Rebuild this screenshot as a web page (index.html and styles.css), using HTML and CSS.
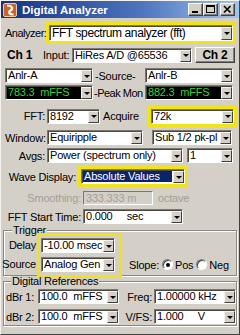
FILE: index.html
```html
<!DOCTYPE html>
<html lang="en">
<head>
    <meta charset="UTF-8">
    <meta name="viewport" content="width=device-width, initial-scale=1.0">
    <title>Digital Analyzer</title>
    <link rel="stylesheet" href="styles.css">
</head>
<body>
    <div class="window">
        <div class="titlebar">
            <svg class="app-icon" width="14" height="14" viewBox="0 0 14 14">
                <rect x="0.5" y="0.5" width="13" height="13" rx="1.5" fill="#c8642c" stroke="#f3c9a2"/>
                <path d="M4 2.5 C9 2.5 10.5 5.5 7.5 7.5 C5 9 6 11.5 10.5 11.5" fill="none" stroke="#fff" stroke-width="2.2"/>
            </svg>
            <span class="title">Digital Analyzer</span>
            <div class="caption">
                <span class="cap-btn"><svg width="13" height="11" viewBox="0 0 13 11"><rect x="3" y="7" width="6" height="2" fill="#000"/></svg></span>
                <span class="cap-btn"><svg width="13" height="11" viewBox="0 0 13 11"><rect x="2.5" y="1.5" width="8" height="7" fill="none" stroke="#000"/><rect x="2" y="1" width="9" height="2" fill="#000"/></svg></span>
                <span class="cap-btn close"><svg width="13" height="11" viewBox="0 0 13 11"><path d="M3 2 L9.5 8.5 M9.5 2 L3 8.5" stroke="#000" stroke-width="1.6"/></svg></span>
            </div>
        </div>

        <div class="panel">
            <div class="row r-analyzer">
                <span class="lbl analyzer-lbl">Analyzer:</span>
                <div class="hilite hl-analyzer">
                    <div class="combo big"><span class="val">FFT spectrum analyzer (fft)</span><span class="arrow"></span></div>
                </div>
            </div>

            <div class="row r-ch">
                <span class="ch1">Ch 1</span>
                <span class="lbl input-lbl">Input:</span>
                <div class="combo w-input"><span class="val">HiRes A/D @65536</span><span class="arrow"></span></div>
                <span class="ch2">Ch 2</span>
            </div>

            <div class="row r-source">
                <div class="combo w-half"><span class="val">Anlr-A</span><span class="arrow"></span></div>
                <span class="lbl mid-lbl">-Source-</span>
                <div class="combo w-half"><span class="val">Anlr-B</span><span class="arrow"></span></div>
            </div>

            <div class="row r-peak">
                <div class="combo lcd w-half"><span class="val">783.3  mFFS</span><span class="arrow"></span></div>
                <span class="lbl mid-lbl tight">-Peak Mon</span>
                <div class="combo lcd w-half"><span class="val">882.3  mFFS</span><span class="arrow"></span></div>
            </div>

            <div class="row r-fft">
                <span class="lbl lbl-r">FFT:</span>
                <div class="combo w-fft"><span class="val">8192</span><span class="arrow"></span></div>
                <span class="lbl acq-lbl">Acquire</span>
                <div class="hilite hl-acq">
                    <div class="combo"><span class="val">72k</span><span class="arrow"></span></div>
                </div>
            </div>

            <div class="row r-window">
                <span class="lbl lbl-r">Window:</span>
                <div class="combo w-window"><span class="val">Equiripple</span><span class="arrow"></span></div>
                <div class="combo w-sub"><span class="val">Sub 1/2 pk-pl</span><span class="arrow"></span></div>
            </div>

            <div class="row r-avgs">
                <span class="lbl lbl-r">Avgs:</span>
                <div class="combo w-avgs"><span class="val">Power (spectrum only)</span><span class="arrow"></span></div>
                <div class="combo w-count"><span class="val">1</span><span class="arrow"></span></div>
            </div>

            <div class="row r-wave">
                <span class="lbl lbl-r lbl-wide">Wave Display:</span>
                <div class="hilite hl-wave">
                    <div class="combo sel"><span class="val">Absolute Values</span><span class="arrow"></span></div>
                </div>
            </div>

            <div class="row r-smooth">
                <span class="lbl lbl-r lbl-long off">Smoothing:</span>
                <div class="field off w-smooth">333.333 m</div>
                <span class="lbl off octave">octave</span>
            </div>

            <div class="row r-start">
                <span class="lbl lbl-r lbl-long">FFT Start Time:</span>
                <div class="combo w-start"><span class="val">0.000     sec</span><span class="arrow"></span></div>
            </div>

            <fieldset class="group trigger">
                <legend>Trigger</legend>
                <div class="trig">
                    <div class="trig-labels">
                        <span class="lbl">Delay</span>
                        <span class="lbl">Source</span>
                    </div>
                    <div class="hilite hl-trig">
                        <div class="combo"><span class="val">-10.00 msec</span><span class="arrow"></span></div>
                        <div class="combo"><span class="val">Analog Gen</span><span class="arrow"></span></div>
                    </div>
                    <div class="slope">
                        <span class="lbl">Slope:</span>
                        <span class="radio checked"></span>
                        <span class="lbl">Pos</span>
                        <span class="radio"></span>
                        <span class="lbl">Neg</span>
                    </div>
                </div>
            </fieldset>

            <fieldset class="group refs">
                <legend>Digital References</legend>
                <div class="row ref-row">
                    <span class="lbl ref-lbl">dBr 1:</span>
                    <div class="combo w-ref"><span class="val">100.0  mFFS</span><span class="arrow"></span></div>
                    <span class="lbl lbl-r ref-r">Freq:</span>
                    <div class="combo w-ref2"><span class="val">1.00000 kHz</span><span class="arrow"></span></div>
                </div>
                <div class="row ref-row">
                    <span class="lbl ref-lbl">dBr 2:</span>
                    <div class="combo w-ref"><span class="val">100.0  mFFS</span><span class="arrow"></span></div>
                    <span class="lbl lbl-r ref-r">V/FS:</span>
                    <div class="combo w-ref2"><span class="val">1.000     V</span><span class="arrow"></span></div>
                </div>
            </fieldset>
        </div>
    </div>
</body>
</html>
```

FILE: styles.css
```css
* {
    box-sizing: border-box;
}
body {
    margin: 0;
    background: #d4d0c8;
    font-family: "Liberation Sans", Arial, sans-serif;
    font-size: 11px;
    letter-spacing: -0.2px;
    color: #000;
}
.window {
    width: 240px;
    height: 335px;
    border: 1px solid;
    border-color: #f4f2ee #404040 #404040 #f4f2ee;
    background: #d4d0c8;
    overflow: hidden;
}
.titlebar {
    height: 17px;
    display: flex;
    align-items: center;
    padding: 0 4px 0 2px;
    background: linear-gradient(90deg, #133383, #4f76bf 60%, #a3c4ec);
}
.app-icon {
    flex: none;
}
.title {
    flex: 1;
    margin-left: 5px;
    color: #fff;
    font-weight: bold;
    font-size: 11.5px;
    letter-spacing: 0;
}
.caption {
    display: flex;
}
.cap-btn {
    width: 15px;
    height: 13px;
    background: #d4d0c8;
    border: 1px solid;
    border-color: #fff #404040 #404040 #fff;
    box-shadow: inset -1px -1px #808080;
}
.cap-btn svg {
    display: block;
}
.cap-btn.close {
    margin-left: 2px;
}

.panel {
    padding: 4px 2px 0 4px;
}
.row {
    display: flex;
    align-items: center;
    height: 15px;
}
.lbl {
    white-space: nowrap;
    flex: none;
}
.lbl-r {
    width: 42px;
    text-align: right;
    padding-right: 2px;
}
.off {
    color: #a39f97;
}

.hilite {
    border: 3px solid #f1e31a;
    flex: none;
}

/* combo boxes */
.combo {
    display: flex;
    flex: none;
    height: 15px;
    background: #fff;
    border: 1px solid;
    border-color: #7b7870 #fff #fff #7b7870;
    box-shadow: inset 1px 1px #4a4842;
}
.combo .val {
    flex: 1;
    min-width: 0;
    overflow: hidden;
    white-space: pre;
    padding-left: 2px;
    line-height: 13px;
}
.combo .arrow {
    width: 11px;
    flex: none;
    margin: 1px 0 0 0;
    background: #d4d0c8;
    border: 1px solid;
    border-color: #f4f2ee #404040 #404040 #f4f2ee;
    display: flex;
    align-items: center;
    justify-content: center;
}
.combo .arrow::after {
    content: "";
    border-top: 3px solid #000;
    border-left: 3px solid transparent;
    border-right: 3px solid transparent;
}
.combo.lcd {
    background: #000;
    color: #36d236;
}
.combo.sel .val {
    margin: 1px;
    padding-left: 1px;
    line-height: 11px;
    background: #0a246a;
    color: #fff;
}
.combo.big {
    height: 16px;
    font-size: 12px;
    letter-spacing: -0.4px;
}
.combo.big .val {
    line-height: 14px;
}

/* rows */
.r-analyzer {
    height: 22px;
}
.analyzer-lbl {
    width: 41px;
    letter-spacing: -0.5px;
}
.hl-analyzer {
    width: 190px;
}
.hl-analyzer .combo {
    width: 184px;
}

.r-ch {
    margin-top: 3px;
    height: 16px;
}
.ch1 {
    width: 38px;
    padding-left: 2px;
    font-weight: bold;
    font-size: 12px;
}
.input-lbl {
    width: 29px;
}
.w-input {
    width: 120px;
}
.ch2 {
    margin-left: 3px;
    width: 40px;
    height: 16px;
    line-height: 14px;
    text-align: center;
    font-weight: bold;
    font-size: 12px;
    border: 1px solid;
    border-color: #fff #404040 #404040 #fff;
    box-shadow: inset -1px -1px #808080;
}

.r-source {
    margin-top: 5px;
}
.r-peak {
    margin-top: 2px;
}
.w-half {
    width: 88px;
}
.mid-lbl {
    width: 52px;
    padding-left: 2px;
}
.mid-lbl.tight {
    padding-left: 1px;
    letter-spacing: -0.5px;
}

.r-fft {
    margin-top: 5px;
    height: 22px;
}
.w-fft {
    width: 53px;
}
.acq-lbl {
    width: 48px;
    padding-left: 3px;
}
.hl-acq {
    width: 89px;
}
.hl-acq .combo {
    width: 83px;
}

.r-window {
    margin-top: 3px;
}
.w-window {
    width: 96px;
}
.w-sub {
    width: 80px;
    margin-left: 9px;
}

.r-avgs {
    margin-top: 3px;
}
.w-avgs {
    width: 136px;
}
.w-count {
    width: 46px;
    margin-left: 4px;
}

.r-wave {
    margin-top: 3px;
    height: 21px;
}
.lbl-wide {
    width: 73px;
}
.hl-wave {
    width: 110px;
}
.hl-wave .combo {
    width: 104px;
}

.r-smooth {
    margin-top: 4px;
    height: 14px;
}
.lbl-long {
    width: 78px;
}
.field {
    height: 14px;
    line-height: 12px;
    padding-left: 2px;
    border: 1px solid;
    border-color: #7b7870 #fff #fff #7b7870;
    white-space: nowrap;
    overflow: hidden;
}
.w-smooth {
    width: 70px;
}
.octave {
    margin-left: 5px;
}

.r-start {
    margin-top: 4px;
}
.w-start {
    width: 100px;
}

/* group boxes */
.group {
    margin: 0 0 0 -2px;
    padding: 0;
    min-width: 0;
    border: 1px solid #8a877f;
    box-shadow: inset 1px 1px #fff, 1px 1px #fff;
}
.group legend {
    padding: 0 1px;
    line-height: 10px;
    background: #d4d0c8;
}
.trigger {
    margin-top: 1px;
    width: 234px;
}
.trigger legend {
    margin-left: 8px;
}
.trig {
    display: flex;
    margin-top: -2px;
    margin-bottom: -3px;
}
.trig-labels {
    width: 33px;
    display: flex;
    flex-direction: column;
    align-items: flex-end;
    gap: 4px;
    padding: 5px 1px 0 0;
}
.trig-labels .lbl {
    line-height: 15px;
}
.hl-trig {
    width: 85px;
    display: flex;
    flex-direction: column;
    gap: 4px;
    padding: 2px 4px 3px 1px;
}
.hl-trig .combo {
    width: 74px;
}
.slope {
    display: flex;
    align-items: center;
    align-self: flex-end;
    height: 15px;
    margin: 0 0 6px 7px;
}
.radio {
    width: 11px;
    height: 11px;
    margin: 0 2px 0 3px;
    border-radius: 50%;
    background: #fff;
    border: 1px solid;
    border-color: #808080 #fff #fff #808080;
    box-shadow: inset 1px 1px #404040;
    display: flex;
    align-items: center;
    justify-content: center;
}
.radio.checked::after {
    content: "";
    width: 4px;
    height: 4px;
    border-radius: 50%;
    background: #000;
}

.refs {
    width: 234px;
    padding-bottom: 1px;
}
.refs legend {
    margin-left: 7px;
}
.ref-row {
    margin-top: 3px;
    padding-left: 2px;
}
.ref-row + .ref-row {
    margin-top: 5px;
}
.ref-lbl {
    width: 32px;
}
.w-ref {
    width: 81px;
}
.ref-r {
    width: 35px;
}
.w-ref2 {
    width: 82px;
}
```
